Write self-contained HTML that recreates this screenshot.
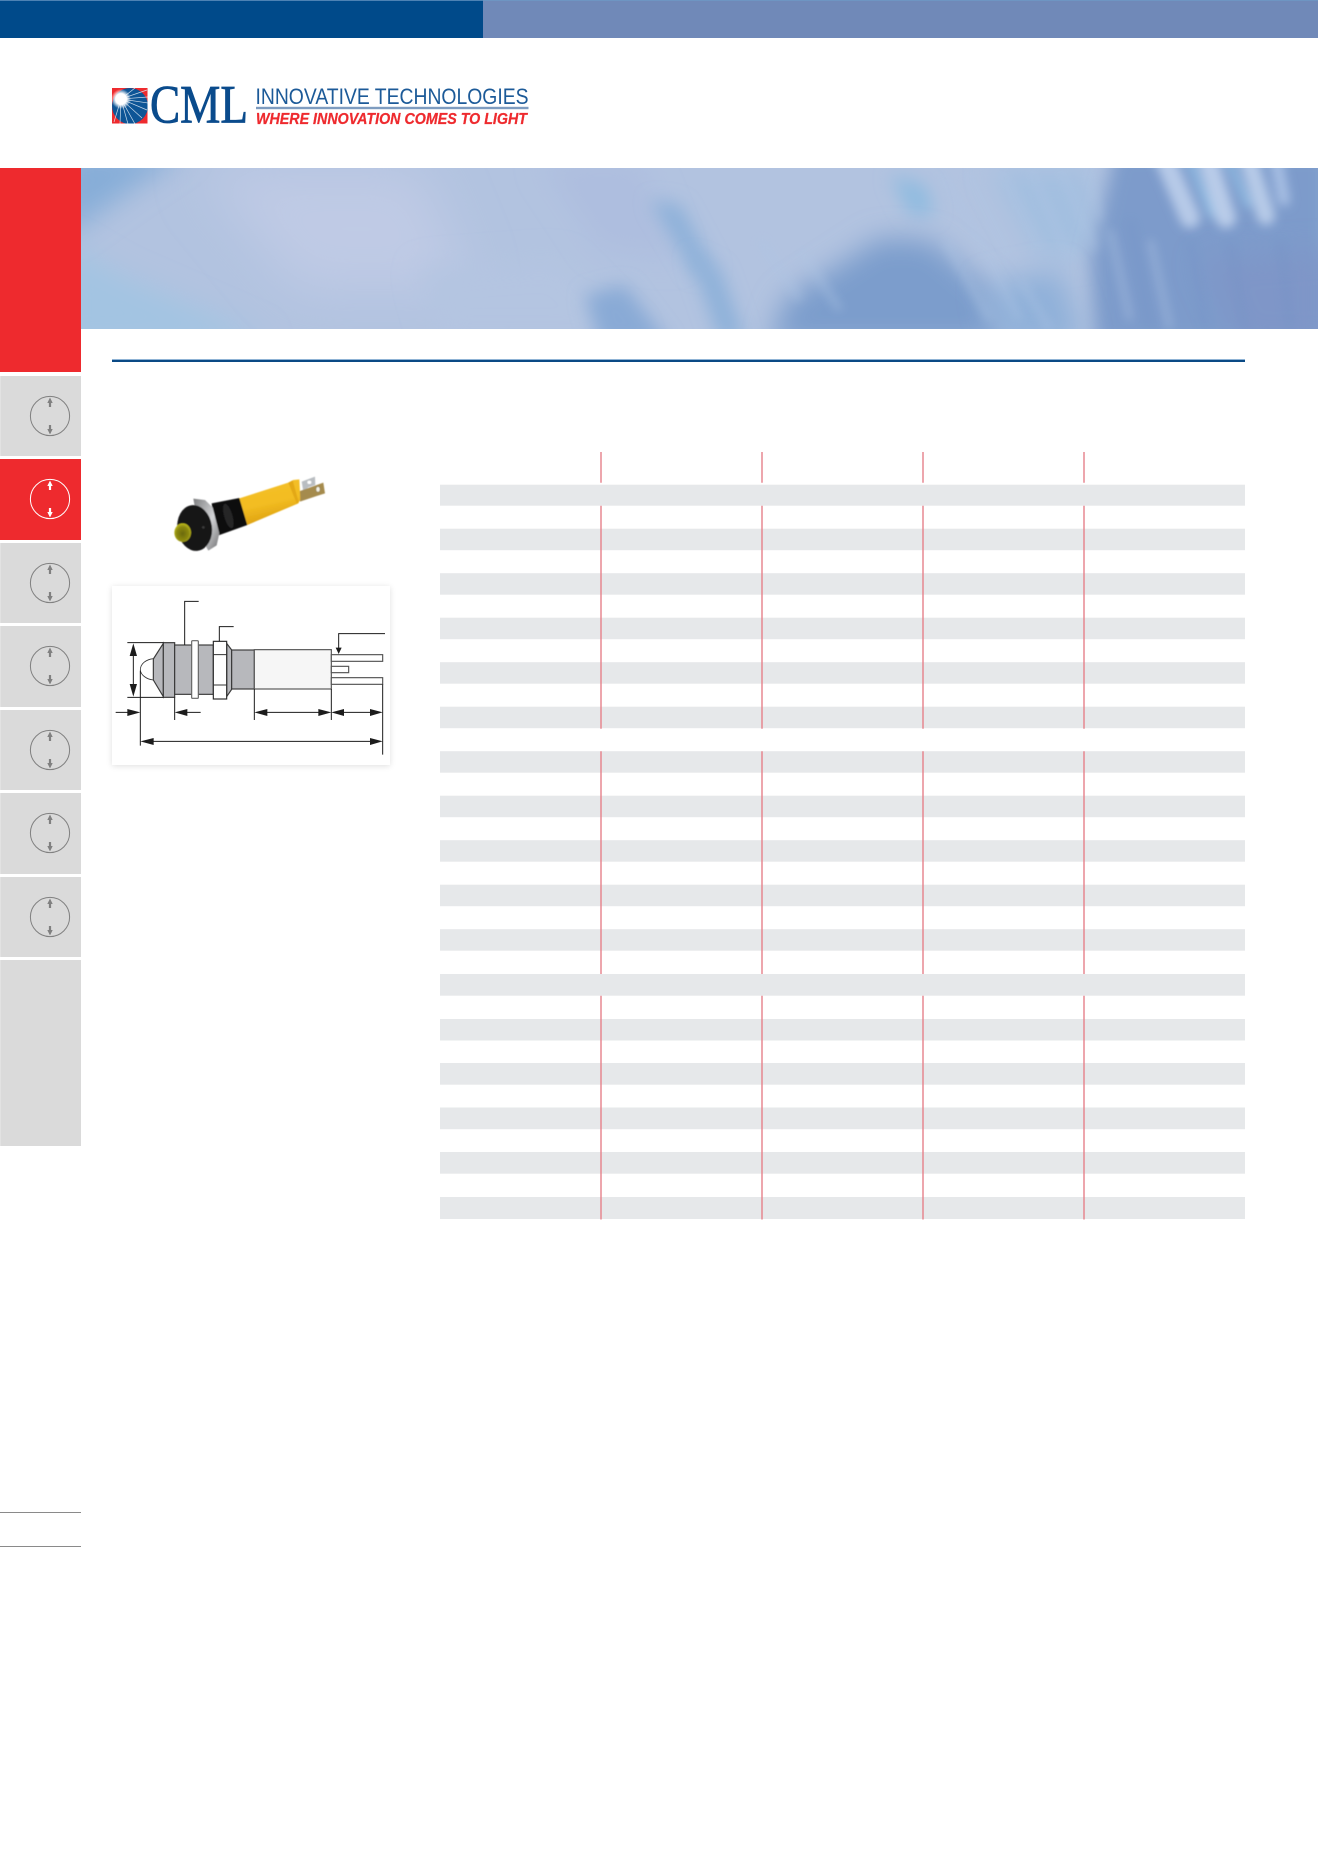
<!DOCTYPE html>
<html lang="en">
<head>
<meta charset="utf-8">
<title>CML Innovative Technologies</title>
<style>
html,body{margin:0;padding:0;background:#fff}
body{position:relative;width:1318px;height:1876px;overflow:hidden}
.abs{position:absolute;display:block}
.tile{position:absolute;left:0;width:81px;height:80.5px;background:#dadada;box-shadow:inset 1px 0 0 #e2e2e2}
.tile svg{position:absolute;left:0;top:0}
.tile.on{background:#ee2a2e;box-shadow:none}
.rule{position:absolute;left:0;width:81px;height:1px;background:#8a8a8a}
</style>
</head>
<body>
<div class="abs" style="left:0;top:0;width:483px;height:38px;background:#004a8a"></div>
<div class="abs" style="left:483px;top:0;width:835px;height:38px;background:#7089b8"></div>
<div class="abs" style="left:0;top:0;width:1318px;height:1px;background:#6d9ac6;opacity:.7"></div>

<!-- logo -->
<svg class="abs" style="left:100px;top:76px" width="450" height="60" viewBox="100 76 450 60">
  <defs>
    <clipPath id="sq"><rect x="112" y="88" width="35.5" height="35.5"/></clipPath>
    <radialGradient id="glow" cx="121" cy="99" r="10" gradientUnits="userSpaceOnUse">
      <stop offset="0" stop-color="#fff"/><stop offset=".55" stop-color="#fff"/><stop offset="1" stop-color="#fff" stop-opacity="0"/>
    </radialGradient>
  </defs>
  <rect x="112" y="88" width="35.5" height="35.5" fill="#ee2a2e"/>
  <g clip-path="url(#sq)">
    <circle cx="130" cy="106" r="18" fill="#0d5596"/>
    <g stroke="#dfe9f3" stroke-width=".7" opacity=".9">
      <path d="M121 99L147 90M121 99L148 97M121 99L148 103M121 99L147 110M121 99L142 118M121 99L135 124M121 99L128 124M121 99L120 124M121 99L114 122M121 99L135 88"/>
    </g>
    <circle cx="121" cy="99" r="10" fill="url(#glow)"/>
  </g>
  <text x="150" y="122.5" font-family="'Liberation Serif',serif" font-size="54" fill="#0a4b8c" stroke="#0a4b8c" stroke-width=".8" textLength="98" lengthAdjust="spacingAndGlyphs">CML</text>
  <text x="255.5" y="104" font-family="'Liberation Sans',sans-serif" font-size="22.5" fill="#1c5a98" textLength="273" lengthAdjust="spacingAndGlyphs">INNOVATIVE TECHNOLOGIES</text>
  <rect x="256" y="106.8" width="272.5" height="2.4" fill="#7e9cc0"/>
  <text x="256" y="124" font-family="'Liberation Sans',sans-serif" font-size="16" font-weight="700" font-style="italic" fill="#ee2a2e" stroke="#ee2a2e" stroke-width=".25" textLength="271" lengthAdjust="spacingAndGlyphs">WHERE INNOVATION COMES TO LIGHT</text>
</svg>

<!-- banner -->
<svg class="abs" style="left:81px;top:168px" width="1237" height="161" viewBox="81 168 1237 161">
  <defs>
    <clipPath id="bn"><rect x="81" y="168" width="1237" height="161"/></clipPath>
    <filter id="b25" x="-50%" y="-50%" width="200%" height="200%"><feGaussianBlur stdDeviation="25"/></filter>
    <filter id="b14" x="-50%" y="-50%" width="200%" height="200%"><feGaussianBlur stdDeviation="14"/></filter>
    <filter id="b9" x="-50%" y="-50%" width="200%" height="200%"><feGaussianBlur stdDeviation="9"/></filter>
    <filter id="b5" x="-50%" y="-50%" width="200%" height="200%"><feGaussianBlur stdDeviation="5"/></filter>
  </defs>
  <g clip-path="url(#bn)">
    <rect x="81" y="168" width="1237" height="161" fill="#b2c3e0"/>
    <polygon points="60,150 190,150 130,190 60,240" fill="#86add8" filter="url(#b14)"/>
    <polygon points="60,240 120,275 270,340 60,350" fill="#a3c4e2" filter="url(#b14)"/>
    <polygon points="200,168 420,168 470,290 300,290" fill="#bfcae5" filter="url(#b25)"/>
    <polygon points="420,270 560,260 640,340 440,340" fill="#b4c5e1" filter="url(#b14)"/>
    <polygon points="540,160 640,160 680,260 600,250" fill="#aebedf" filter="url(#b14)"/>
    <polygon points="650,200 680,205 715,270 695,275" fill="#8cb0d9" filter="url(#b9)"/>
    <polygon points="690,255 720,270 745,340 720,340" fill="#8cb0d9" filter="url(#b9)"/>
    <polygon points="585,295 625,285 670,345 600,345" fill="#89aad6" filter="url(#b9)"/>
    <polygon points="890,175 925,185 935,215 910,215" fill="#8fbbe0" filter="url(#b9)"/>
    <polygon points="990,168 1090,168 1100,250 1040,260" fill="#a3bfe0" filter="url(#b14)"/>
    <polygon points="1115,150 1330,150 1330,345 1095,345 1090,260" fill="#7d9bcb" filter="url(#b9)"/>
    <polygon points="880,238 930,240 990,290 1010,345 770,345 785,300" fill="#7b9dcc" filter="url(#b14)"/>
    <polygon points="985,285 1060,270 1085,345 1000,345" fill="#8fb0d9" filter="url(#b14)"/>
    <polygon points="1200,260 1330,250 1330,345 1240,345" fill="#7f96c8" filter="url(#b14)"/>
    <g stroke-linecap="round" fill="none" filter="url(#b5)">
      <path d="M1163 155L1190 218" stroke="#b7cae8" stroke-width="20"/>
      <path d="M1187 155L1212 215" stroke="#8fbbe2" stroke-width="7"/>
      <path d="M1206 155L1226 218" stroke="#b9cce9" stroke-width="20"/>
      <path d="M1226 155L1248 205" stroke="#8fbbe2" stroke-width="7"/>
      <path d="M1247 155L1266 216" stroke="#b7cbe8" stroke-width="18"/>
      <path d="M1275 155L1284 200" stroke="#a8c0e4" stroke-width="12"/>
    </g>
    <g stroke="#aec5e4" stroke-width="7" fill="none" opacity=".45" filter="url(#b5)">
      <path d="M1000 168L1040 250M1030 168L1070 260M1060 168L1095 250M1085 168L1100 220M800 250L840 310M760 240L800 300M940 170L985 250M965 170L1010 260M1110 230L1130 320M1150 240L1170 329M1020 280L1050 329M945 240L990 320M975 230L1020 320"/>
    </g>
    <g stroke="#6f90c4" stroke-width="7" fill="none" opacity=".3" filter="url(#b5)">
      <path d="M1130 220L1150 329M1190 240L1205 329M1230 240L1245 329M1280 240L1290 329"/>
    </g>
  </g>
</svg>

<!-- section rule -->
<div class="abs" style="left:112px;top:359px;width:1133px;height:1px;background:#8fb3d5"></div>
<div class="abs" style="left:112px;top:360px;width:1133px;height:2px;background:#0a4a85"></div>

<!-- sidebar -->
<svg width="0" height="0" style="position:absolute">
  <defs>
    <symbol id="ic" viewBox="0 0 81 80" width="81" height="80">
      <circle cx="50" cy="40" r="19.6" fill="none" stroke="currentColor" stroke-width="1"/>
      <path d="M50 21.5L52.7 27H51.1V31H48.9V27H47.3Z" fill="currentColor"/>
      <path d="M50 58.5L52.7 53H51.1V49H48.9V53H47.3Z" fill="currentColor"/>
    </symbol>
  </defs>
</svg>
<div class="abs" style="left:0;top:168px;width:81px;height:204px;background:#ee2a2e"></div>
<div class="tile" style="top:375.5px;color:#808080"><svg width="81" height="80"><use href="#ic"/></svg></div>
<div class="tile on" style="top:459px;color:#fff"><svg width="81" height="80"><use href="#ic"/></svg></div>
<div class="tile" style="top:542.5px;color:#808080"><svg width="81" height="80"><use href="#ic"/></svg></div>
<div class="tile" style="top:626px;color:#808080"><svg width="81" height="80"><use href="#ic"/></svg></div>
<div class="tile" style="top:709.5px;color:#808080"><svg width="81" height="80"><use href="#ic"/></svg></div>
<div class="tile" style="top:793px;color:#808080"><svg width="81" height="80"><use href="#ic"/></svg></div>
<div class="tile" style="top:876.5px;color:#808080"><svg width="81" height="80"><use href="#ic"/></svg></div>
<div class="tile" style="top:960px;height:186px"></div>
<div class="rule" style="top:1512px"></div>
<div class="rule" style="top:1546px"></div>

<!-- product photo -->
<svg class="abs" style="left:160px;top:470px" width="180" height="100" viewBox="0 0 540 300">
  <defs>
    <linearGradient id="yl" x1="0" y1="0" x2=".3" y2="1">
      <stop offset="0" stop-color="#f4c02a"/><stop offset=".6" stop-color="#f3bd22"/><stop offset="1" stop-color="#dca010"/>
    </linearGradient>
    <linearGradient id="sv" x1="0" y1="0" x2="1" y2="1">
      <stop offset="0" stop-color="#7d7e80"/><stop offset=".55" stop-color="#d3d4d6"/><stop offset="1" stop-color="#6f7072"/>
    </linearGradient>
    <radialGradient id="dm" cx=".5" cy=".55" r=".55">
      <stop offset="0" stop-color="#6a6808"/><stop offset=".7" stop-color="#8f8c12"/><stop offset="1" stop-color="#c5c11c"/>
    </radialGradient>
    <filter id="ph"><feGaussianBlur stdDeviation="1.2"/></filter>
  </defs>
  <g filter="url(#ph)">
    <polygon points="425,35 465,20 466,45 445,52 430,65" fill="#b9bdc1"/>
    <ellipse cx="448" cy="37" rx="6" ry="5" fill="#fff"/>
    <polygon points="415,65 490,38 495,70 470,78 420,95" fill="#a58b4d"/>
    <ellipse cx="474" cy="58" rx="6" ry="8" fill="#f2f0e4" stroke="#6b5a2a"/>
    <polygon points="238,85 385,38 400,30 418,28 421,88 415,100 262,165" fill="url(#yl)"/>
    <polygon points="385,38 398,31 416,96 410,100" fill="#e3a812"/>
    <polygon points="155,100 238,84 262,165 165,200" fill="#0f0f11"/>
    <ellipse cx="205" cy="138" rx="12" ry="38" transform="rotate(-16 205 138)" fill="#262628"/>
    <path d="M100 86L135 90L158 112L178 190L170 226L145 242L120 200Z" fill="url(#sv)"/>
    <ellipse cx="104" cy="174" rx="52" ry="69" transform="rotate(-8 104 174)" fill="#131315"/>
    <ellipse cx="130" cy="172" rx="4" ry="4" fill="#3a3a3a"/>
    <ellipse cx="68" cy="188" rx="25" ry="28" fill="url(#dm)"/>
  </g>
</svg>

<!-- drawing card -->
<div class="abs" style="left:112px;top:586px;width:278px;height:179px;background:#fff;box-shadow:0 1px 6px rgba(0,0,0,.13)"></div>
<svg class="abs" style="left:100px;top:580px" width="300" height="190" viewBox="0 0 900 570">
  <g fill="#b7b8bc" stroke="#3a3a3a" stroke-width="3.5">
    <polygon points="160,237 190,190 190,350 160,300"/>
    <rect x="190" y="188" width="34" height="164"/>
    <rect x="224" y="195" width="116" height="148"/>
    <polygon points="380,190 395,210 395,328 380,350"/>
    <rect x="395" y="210" width="68" height="117"/>
  </g>
  <rect x="275" y="182" width="20" height="173" rx="3" fill="#fff" stroke="#666" stroke-width="3.5"/>
  <rect x="340" y="184" width="40" height="173" fill="#fff" stroke="#2a2a2a" stroke-width="3.5"/>
  <path d="M340 224H380M340 315H380" stroke="#333" stroke-width="3"/>
  <rect x="463" y="209" width="231" height="118" fill="#f6f6f6" stroke="#555" stroke-width="3.5"/>
  <g fill="#fff" stroke="#555" stroke-width="3.5">
    <rect x="694" y="224" width="154" height="20"/>
    <rect x="694" y="259" width="52" height="19"/>
    <rect x="694" y="293" width="154" height="20"/>
  </g>
  <path d="M121 270C121 250 140 238 160 236M121 270C122 285 140 298 160 300" fill="#fff" stroke="#333" stroke-width="2.5"/>
  <g fill="none" stroke="#1c1c1c" stroke-width="3">
    <path d="M254 195V64H296"/>
    <path d="M358 184V140H401"/>
    <path d="M855 161H716V205"/>
    <path d="M82 188H190M82 352H190"/>
    <path d="M100 205V335"/>
    <path d="M47 397H100M240 397H302M490 397H670M720 397H825M150 484H825"/>
    <path d="M121 272V497M224 352V420M463 327V420M694 327V420M848 313V524"/>
  </g>
  <g fill="#1c1c1c">
    <polygon points="100,190 89,228 111,228"/>
    <polygon points="100,350 89,312 111,312"/>
    <polygon points="716,222 707,203 725,203"/>
    <polygon points="121,397 82,387 82,408"/>
    <polygon points="224,397 262,387 262,408"/>
    <polygon points="463,397 502,387 502,408"/>
    <polygon points="694,397 655,387 655,408"/>
    <polygon points="694,397 732,387 732,408"/>
    <polygon points="848,397 810,387 810,408"/>
    <polygon points="121,484 161,474 161,495"/>
    <polygon points="848,484 810,474 810,495"/>
  </g>
</svg>

<!-- table -->
<svg class="abs" style="left:440px;top:450px" width="806" height="772" viewBox="440 450 806 772">
  <g fill="#e6e8ea">
    <rect x="440" y="484.7" width="805" height="21"/>
    <rect x="440" y="528.7" width="805" height="21.5"/>
    <rect x="440" y="573.2" width="805" height="21.5"/>
    <rect x="440" y="617.7" width="805" height="21.5"/>
    <rect x="440" y="662.2" width="805" height="21.5"/>
    <rect x="440" y="706.7" width="805" height="21.5"/>
    <rect x="440" y="751.2" width="805" height="21.5"/>
    <rect x="440" y="795.7" width="805" height="21.5"/>
    <rect x="440" y="840.2" width="805" height="21.5"/>
    <rect x="440" y="884.7" width="805" height="21.5"/>
    <rect x="440" y="929.2" width="805" height="21.5"/>
    <rect x="440" y="974" width="805" height="21.7"/>
    <rect x="440" y="1019" width="805" height="21.5"/>
    <rect x="440" y="1063" width="805" height="21.7"/>
    <rect x="440" y="1107.5" width="805" height="21.7"/>
    <rect x="440" y="1152" width="805" height="21.7"/>
    <rect x="440" y="1197" width="805" height="22"/>
  </g>
  <g stroke="#e5808a" stroke-width="1.4" fill="none">
    <path d="M601 452V482.7M601 505.7V728.7M601 751.2V974M601 995.7V1219.5"/>
    <path d="M762 452V482.7M762 505.7V728.7M762 751.2V974M762 995.7V1219.5"/>
    <path d="M923 452V482.7M923 505.7V728.7M923 751.2V974M923 995.7V1219.5"/>
    <path d="M1084 452V482.7M1084 505.7V728.7M1084 751.2V974M1084 995.7V1219.5"/>
  </g>
</svg>
</body>
</html>
